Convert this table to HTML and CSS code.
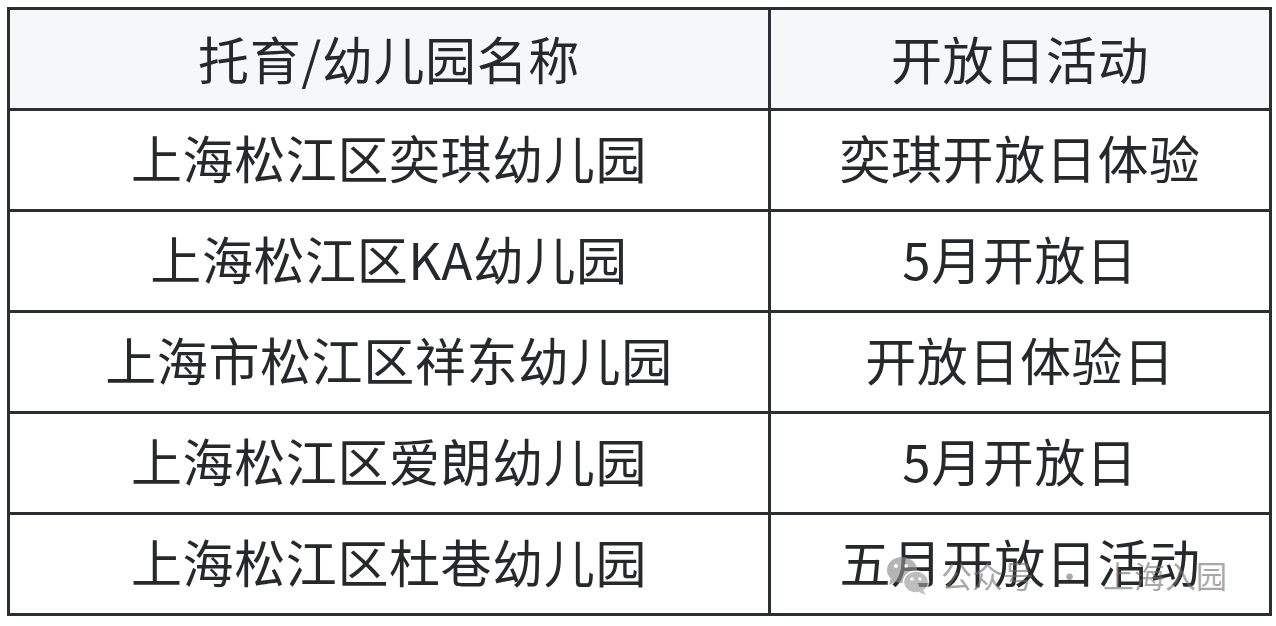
FILE: index.html
```html
<!DOCTYPE html>
<html lang="zh">
<head>
<meta charset="utf-8">
<title>开放日活动</title>
<link rel="stylesheet" href="styles.css">
</head>
<body>
<div class="wrap">
  <table class="tbl">
    <colgroup><col class="c1"><col class="c2"></colgroup>
    <thead>
      <tr><th>托育/幼儿园名称</th><th>开放日活动</th></tr>
    </thead>
    <tbody>
      <tr><td>上海松江区奕琪幼儿园</td><td>奕琪开放日体验</td></tr>
      <tr><td>上海松江区KA幼儿园</td><td>5月开放日</td></tr>
      <tr><td>上海市松江区祥东幼儿园</td><td>开放日体验日</td></tr>
      <tr><td>上海松江区爱朗幼儿园</td><td>5月开放日</td></tr>
      <tr><td>上海松江区杜巷幼儿园</td><td>五月开放日活动</td></tr>
    </tbody>
  </table>
  <div class="wm">
    <svg class="wm-icon" width="46" height="42" viewBox="0 0 46 42">
      <ellipse cx="17" cy="16" rx="15" ry="13" fill="#8e8e8e"/>
      <path d="M6 24 L4 31 L12 27 Z" fill="#8e8e8e"/>
      <ellipse cx="31" cy="28" rx="12.5" ry="11" fill="#9c9c9c" stroke="#fff" stroke-width="1.5"/>
      <path d="M38 36 L41 41 L34 38 Z" fill="#9c9c9c"/>
      <circle cx="11" cy="12" r="2" fill="#fff"/>
      <circle cx="21" cy="12" r="2" fill="#fff"/>
      <circle cx="27" cy="25" r="1.7" fill="#fff"/>
      <circle cx="35" cy="25" r="1.7" fill="#fff"/>
    </svg>
    <span class="wm-text">公众号</span>
    <span class="wm-dot">·</span>
    <span class="wm-text">上海入园</span>
  </div>
</div>
</body>
</html>
```

FILE: styles.css
```css
html, body {
  margin: 0;
  padding: 0;
  background: #ffffff;
}
.wrap {
  position: relative;
  padding: 7px 0 0 7px;
}
.tbl {
  border-collapse: collapse;
  width: 1262px;
  table-layout: fixed;
  font-family: "Noto Sans CJK SC", "Noto Sans", sans-serif;
  font-size: 51px;
  color: #26282c;
}
.c1 { width: 761px; }
.c2 { width: 501px; }
.tbl th, .tbl td {
  border: 3px solid #2b2e33;
  height: 92px;
  padding: 0 0 6px 0;
  text-align: center;
  vertical-align: middle;
  font-weight: 400;
  line-height: 1;
  letter-spacing: 0.6px;
}
.tbl th {
  background: #f6f7f9;
  height: 96px;
  padding: 0 0 2px 0;
}
.wm {
  position: absolute;
  left: 885px;
  top: 552px;
  display: flex;
  align-items: center;
  gap: 6px;
  font-family: "Noto Sans CJK SC", sans-serif;
  font-size: 31px;
  color: rgba(110, 110, 110, 0.6);
}
.wm-icon {
  opacity: 0.65;
  margin-right: 4px;
}
.wm-dot {
  margin: 0 12px 0 14px;
}
```
